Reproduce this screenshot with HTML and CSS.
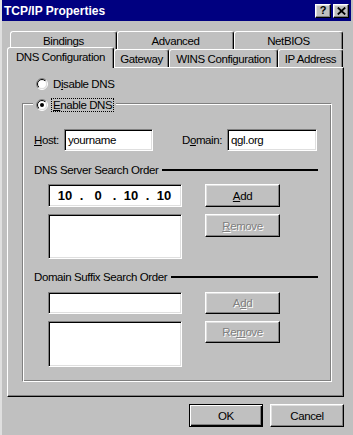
FILE: index.html
```html
<!DOCTYPE html>
<html>
	<head>
		<meta charset="UTF-8">
		<title>TCP/IP Properties</title>
		<link rel="stylesheet" href="styles.css">
	</head>
	<body>
		<div class="window">
			<div class="titlebar">
				<span class="title">TCP/IP Properties</span>
				<div class="tbtns">
					<div class="tbtn help">?</div>
					<div class="tbtn close">
						<svg width="9" height="8" viewBox="0 0 9 8"><path d="M0.8 0.5L8.2 7.5M8.2 0.5L0.8 7.5" stroke="#000" stroke-width="1.8" fill="none"/></svg>
					</div>
				</div>
			</div>
			<div class="content">
				<div class="tabrow back">
					<div class="tab" style="width:107px">Bindings</div>
					<div class="tab" style="width:117px">Advanced</div>
					<div class="tab" style="width:109px">NetBIOS</div>
				</div>
				<div class="tabrow front">
					<div class="tab sel" style="width:107px">DNS Configuration</div>
					<div class="tab" style="width:55px">Gateway</div>
					<div class="tab" style="width:109px">WINS Configuration</div>
					<div class="tab" style="width:65px">IP Address</div>
				</div>
				<div class="sheet">
					<div class="radio-row">
						<svg class="radio" width="12" height="12" viewBox="0 0 12 12">
							<defs>
								<linearGradient id="ra1" x1="0" y1="0" x2="1" y2="1"><stop offset="0.5" stop-color="#808080"/><stop offset="0.5" stop-color="#fff"/></linearGradient>
								<linearGradient id="rb1" x1="0" y1="0" x2="1" y2="1"><stop offset="0.5" stop-color="#000"/><stop offset="0.5" stop-color="#dfdfdf"/></linearGradient>
							</defs>
							<circle cx="6" cy="6" r="5.5" fill="none" stroke="url(#ra1)"/>
							<circle cx="6" cy="6" r="4.5" fill="#fff" stroke="url(#rb1)"/>
						</svg>
						<span class="rlabel">D<u>i</u>sable DNS</span>
					</div>
					<div class="group">
						<div class="legend">
							<svg class="radio" width="12" height="12" viewBox="0 0 12 12">
								<defs>
									<linearGradient id="ra2" x1="0" y1="0" x2="1" y2="1"><stop offset="0.5" stop-color="#808080"/><stop offset="0.5" stop-color="#fff"/></linearGradient>
									<linearGradient id="rb2" x1="0" y1="0" x2="1" y2="1"><stop offset="0.5" stop-color="#000"/><stop offset="0.5" stop-color="#dfdfdf"/></linearGradient>
								</defs>
								<circle cx="6" cy="6" r="5.5" fill="none" stroke="url(#ra2)"/>
								<circle cx="6" cy="6" r="4.5" fill="#fff" stroke="url(#rb2)"/>
								<circle cx="6" cy="6" r="2" fill="#000"/>
							</svg>
							<span class="focus"><u>E</u>nable DNS</span>
						</div>
						<div class="field-row">
							<span class="lbl host"><u>H</u>ost:</span>
							<div class="field w89">yourname</div>
							<span class="lbl domain">D<u>o</u>main:</span>
							<div class="field w90">qgl.org</div>
						</div>
						<div class="section">
							<span>DNS Server Search Order</span>
							<div class="rule"></div>
						</div>
						<div class="lists">
							<div class="col-left">
								<div class="field ip">
									<span class="oct">10</span><span class="dot">.</span>
									<span class="oct">0</span><span class="dot">.</span>
									<span class="oct">10</span><span class="dot">.</span>
									<span class="oct">10</span>
								</div>
								<div class="field list"></div>
							</div>
							<div class="col-right">
								<div class="btn h23"><u>A</u>dd</div>
								<div class="btn h23 off"><u>R</u>emove</div>
							</div>
						</div>
						<div class="section sec2">
							<span>Domain Suffix Search Order</span>
							<div class="rule"></div>
						</div>
						<div class="lists lists2">
							<div class="col-left">
								<div class="field h22"></div>
								<div class="field list2"></div>
							</div>
							<div class="col-right">
								<div class="btn h22 off">A<u>d</u>d</div>
								<div class="btn h22 off">Re<u>m</u>ove</div>
							</div>
						</div>
					</div>
				</div>
				<div class="footer">
					<div class="btn default">OK</div>
					<div class="btn">Cancel</div>
				</div>
			</div>
		</div>
	</body>
</html>
```
FILE: styles.css
```css
* {
	margin: 0;
	padding: 0;
	box-sizing: border-box;
}

body {
	background: #c0c0c0;
	font-family: "Liberation Sans", Arial, sans-serif;
	font-size: 11.5px;
	letter-spacing: -0.4px;
	color: #000;
}

u {
	text-decoration: underline;
	text-underline-offset: 1px;
}

.window {
	width: 353px;
	height: 435px;
	background: #c0c0c0;
	border-left: 2px solid #dfdfdf;
	border-right: 2px solid #c0c0c0;
}

/* title bar */
.titlebar {
	height: 21px;
	background: #000080;
	color: #fff;
	display: flex;
	align-items: center;
	justify-content: space-between;
	padding: 0 2px 0 2px;
}

.title {
	font-size: 12px;
	font-weight: bold;
	letter-spacing: 0;
	padding-top: 1px;
}

.tbtns {
	display: flex;
	gap: 2px;
}

.tbtn {
	width: 16px;
	height: 14px;
	background: #c0c0c0;
	border: 1px solid;
	border-color: #fff #000 #000 #fff;
	box-shadow: inset -1px -1px #808080, inset 1px 1px #dfdfdf;
	display: flex;
	align-items: center;
	justify-content: center;
	color: #000;
}

.tbtn.help {
	font-size: 11px;
	font-weight: bold;
	letter-spacing: 0;
	line-height: 1;
}

/* tabs */
.content {
	padding: 10px 7px 0 5px;
}

.tabrow {
	display: flex;
	height: 18px;
}

.tabrow.back {
	margin-left: 3px;
}

.tabrow.front {
	align-items: flex-end;
}

.tab {
	height: 18px;
	background: #c0c0c0;
	border: 1px solid;
	border-bottom: none;
	border-color: #fff #000 transparent #fff;
	border-radius: 3px 3px 0 0;
	box-shadow: inset -1px 0 #808080;
	display: flex;
	align-items: center;
	justify-content: center;
	white-space: nowrap;
}

.tab.sel {
	height: 21px;
	margin-bottom: -1px;
	padding-bottom: 2px;
	position: relative;
	z-index: 1;
}

/* property sheet */
.sheet {
	height: 330px;
	border: 1px solid;
	border-color: #fff #000 #000 #fff;
	box-shadow: inset -1px -1px #808080;
	padding-top: 9px;
}

.radio-row {
	display: flex;
	align-items: center;
	height: 14px;
	margin-left: 28px;
}

.radio {
	flex: none;
	display: block;
}

.rlabel {
	margin-left: 5px;
}

.group {
	margin: 12px 11px 0 14px;
	border: 1px solid;
	border-color: #808080 #fff #fff #808080;
	box-shadow: inset 1px 1px #fff, inset -1px -1px #808080;
	padding-bottom: 14px;
}

.legend {
	display: flex;
	align-items: center;
	width: fit-content;
	height: 14px;
	margin: -6px 0 0 10px;
	padding: 0 2px 0 3px;
	background: #c0c0c0;
}

.focus {
	margin-left: 3px;
	height: 14px;
	padding: 0 1px;
	border: 1px dotted #000;
	display: flex;
	align-items: center;
}

.field-row {
	display: flex;
	align-items: center;
	margin: 17px 0 0 11px;
}

.lbl.host {
	width: 30px;
}

.lbl.domain {
	width: 45px;
	margin-left: 29px;
}

.field {
	height: 22px;
	background: #fff;
	border: 1px solid;
	border-color: #808080 #fff #fff #808080;
	box-shadow: inset 1px 1px #000, inset -1px -1px #dfdfdf;
	padding: 0 3px;
	display: flex;
	align-items: center;
}

.w89 {
	width: 89px;
}

.w90 {
	width: 90px;
}

.section {
	display: flex;
	align-items: center;
	height: 14px;
	margin: 12px 13px 0 11px;
}

.section.sec2 {
	margin-top: 11px;
}

.rule {
	flex: 1;
	height: 2px;
	background: #000;
	margin-left: 4px;
}

.lists {
	display: flex;
	gap: 23px;
	margin: 7px 0 0 25px;
}

.lists.lists2 {
	margin-top: 8px;
}

.col-left {
	width: 134px;
	display: flex;
	flex-direction: column;
	gap: 7px;
}

.col-right {
	width: 75px;
	display: flex;
	flex-direction: column;
	gap: 7px;
}

.field.ip {
	height: 23px;
	padding: 0 0 0 3px;
	font-size: 13px;
	font-weight: bold;
	letter-spacing: 0;
}

.oct {
	width: 26px;
	text-align: center;
}

.dot {
	width: 7px;
	text-align: center;
}

.field.list {
	height: 45px;
}

.field.list2 {
	height: 46px;
}

.h22 {
	height: 22px;
}

.h23 {
	height: 23px;
}

/* push buttons */
.btn {
	height: 23px;
	width: 75px;
	background: #c0c0c0;
	border: 1px solid;
	border-color: #fff #000 #000 #fff;
	box-shadow: inset -1px -1px #808080, inset 1px 1px #dfdfdf;
	display: flex;
	align-items: center;
	justify-content: center;
}

.btn.h22 {
	height: 22px;
}

.btn.off {
	color: #808080;
	text-shadow: 1px 1px #fff;
}

.footer {
	display: flex;
	justify-content: flex-end;
	gap: 7px;
	margin-top: 7px;
}

.footer .btn {
	width: 74px;
}

.btn.default {
	border-color: #000;
	box-shadow: inset 1px 1px #fff, inset -1px -1px #000, inset -2px -2px #808080;
}
```
